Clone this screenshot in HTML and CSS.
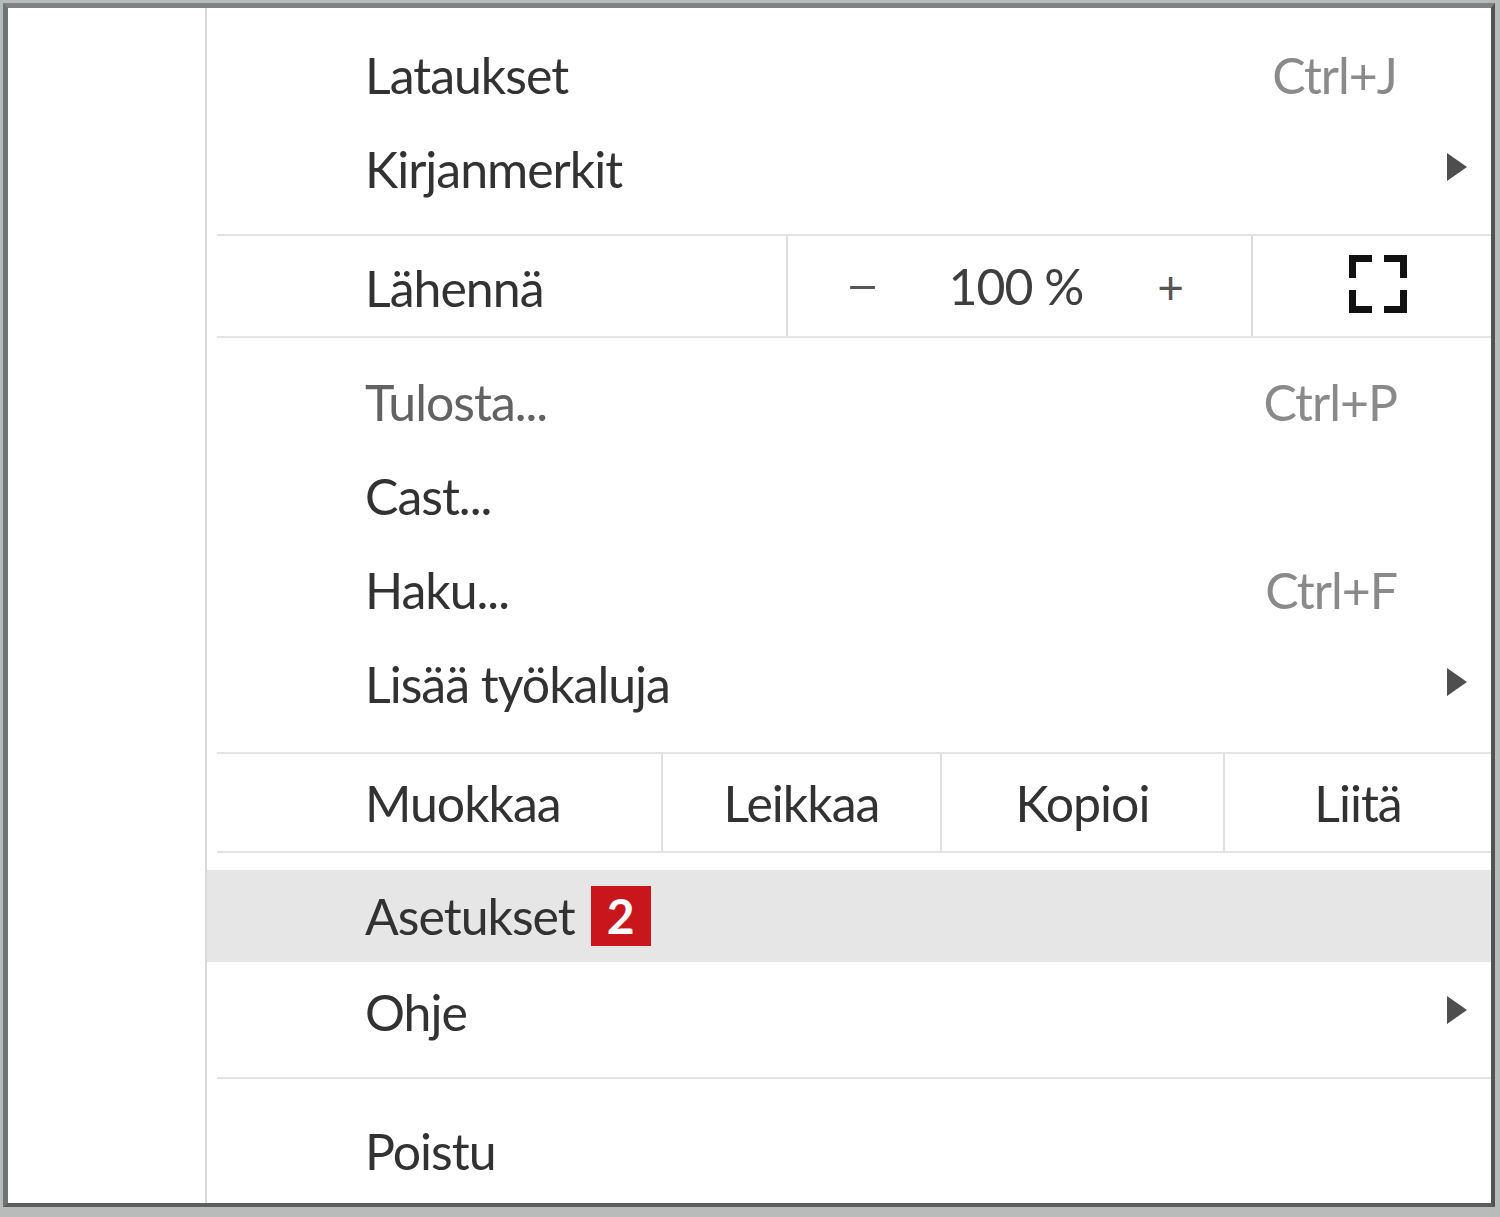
FILE: index.html
```html
<!DOCTYPE html>
<html lang="fi">
<head>
<meta charset="utf-8">
<title>Valikko</title>
<link rel="stylesheet" href="styles.css">
</head>
<body>
<div class="frame">
  <div class="gutter"></div>
  <div class="menu">
    <div class="item first"><span class="label">Lataukset</span><span class="key">Ctrl+J</span></div>
    <div class="item"><span class="label">Kirjanmerkit</span><span class="arrow"></span></div>
    <div class="sep sep-top"></div>
    <div class="zoomrow">
      <div class="zcell zlabel">Lähennä</div>
      <div class="zcell zctrl"><span class="zbtn"><span class="minus">–</span></span><span class="zval">100 %</span><span class="zbtn">+</span></div>
      <div class="zcell zfull">
        <svg class="fs" width="58" height="58" viewBox="0 0 58 58" aria-hidden="true">
          <path d="M3.5 23 V3.5 H23 M35 3.5 H54.5 V23 M3.5 35 V54.5 H23 M35 54.5 H54.5 V35" fill="none" stroke="#111" stroke-width="7"/>
        </svg>
      </div>
    </div>
    <div class="sep sep-after-zoom"></div>
    <div class="item"><span class="label dim">Tulosta...</span><span class="key">Ctrl+P</span></div>
    <div class="item"><span class="label">Cast...</span></div>
    <div class="item"><span class="label">Haku...</span><span class="key">Ctrl+F</span></div>
    <div class="item"><span class="label">Lisää työkaluja</span><span class="arrow"></span></div>
    <div class="sep sep-before-edit"></div>
    <div class="editrow">
      <div class="ecell elabel">Muokkaa</div>
      <div class="ecell ecut">Leikkaa</div>
      <div class="ecell ecopy">Kopioi</div>
      <div class="ecell epaste">Liitä</div>
    </div>
    <div class="sep sep-after-edit"></div>
    <div class="item hl"><span class="label">Asetukset<span class="badge">2</span></span></div>
    <div class="item help"><span class="label">Ohje</span><span class="arrow"></span></div>
    <div class="sep sep-before-exit"></div>
    <div class="item exit"><span class="label">Poistu</span></div>
  </div>
</div>
</body>
</html>
```
FILE: styles.css
```css
html, body {
  margin: 0;
  padding: 0;
}
body {
  width: 1500px;
  height: 1217px;
  background: #b9bbbb;
  font-family: "Lato", "Open Sans", "DejaVu Sans", sans-serif;
  overflow: hidden;
}
.frame {
  box-sizing: border-box;
  display: flex;
  margin: 3px 5px 0 3px;
  height: 1204px;
  background: #ffffff;
  border-style: solid;
  border-width: 5px 4px 4px 5px;
  border-color: #7e8282 #505454 #5a5e5e #6e7474;
}
.gutter {
  box-sizing: border-box;
  width: 199px;
  flex: none;
  border-right: 2px solid #d9d9d9;
}
.menu {
  flex: 1;
  display: flex;
  flex-direction: column;
  padding-top: 20px;
  color: #323232;
  font-size: 50px;
  letter-spacing: -1px;
}
.item {
  height: 94px;
  flex: none;
  display: flex;
  align-items: center;
  padding: 0 24px 0 158px;
}
.label {
  flex: 1;
  display: flex;
  align-items: center;
  white-space: nowrap;
}
.dim {
  color: #626262;
}
.key {
  color: #8a8a8a;
  margin-right: 70px;
}
.arrow {
  width: 0;
  height: 0;
  border-left: 20px solid #4e4e4e;
  border-top: 14px solid transparent;
  border-bottom: 14px solid transparent;
  margin-top: -4px;
}
.sep {
  height: 2px;
  flex: none;
  margin-left: 10px;
  background: #e3e3e3;
}
.sep-top { margin-top: 18px; }
.sep-after-zoom { margin-bottom: 17px; }
.sep-before-edit { margin-top: 21px; }
.sep-after-edit { margin-bottom: 17px; }
.sep-before-exit { margin-top: 15px; margin-bottom: 25px; }

.zoomrow {
  height: 100px;
  flex: none;
  display: flex;
}
.zcell {
  display: flex;
  align-items: center;
  box-sizing: border-box;
}
.zlabel {
  width: 579px;
  padding-left: 158px;
  padding-top: 4px;
}
.zctrl {
  width: 465px;
  border-left: 2px solid #dcdcdc;
  padding: 0 56px 0 49px;
  justify-content: space-between;
  color: #4a4a4a;
}
.zbtn {
  width: 50px;
  text-align: center;
  font-size: 46px;
  color: #555;
}
.minus {
  display: inline-block;
  transform: translateY(-3px) scaleX(1.35);
}
.zval {
  color: #3e3e3e;
}
.zfull {
  flex: 1;
  border-left: 2px solid #dcdcdc;
  justify-content: center;
  padding-left: 12px;
}
.fs {
  display: block;
  margin-top: -4px;
}

.editrow {
  height: 97px;
  flex: none;
  display: flex;
}
.ecell {
  display: flex;
  align-items: center;
  box-sizing: border-box;
  justify-content: center;
  border-left: 2px solid #e0e0e0;
}
.elabel {
  width: 454px;
  justify-content: flex-start;
  padding-left: 158px;
  border-left: none;
}
.ecut { width: 279px; }
.ecopy { width: 283px; }
.epaste { flex: 1; }

.hl {
  height: 92px;
  background: #e6e6e6;
}
.help {
  height: 100px;
}
.badge {
  display: inline-flex;
  align-items: center;
  justify-content: center;
  width: 60px;
  height: 60px;
  margin-left: 16px;
  background: #c9161c;
  color: #ffffff;
  font-weight: 700;
  font-size: 48px;
  line-height: 1;
  letter-spacing: 0;
}
```
